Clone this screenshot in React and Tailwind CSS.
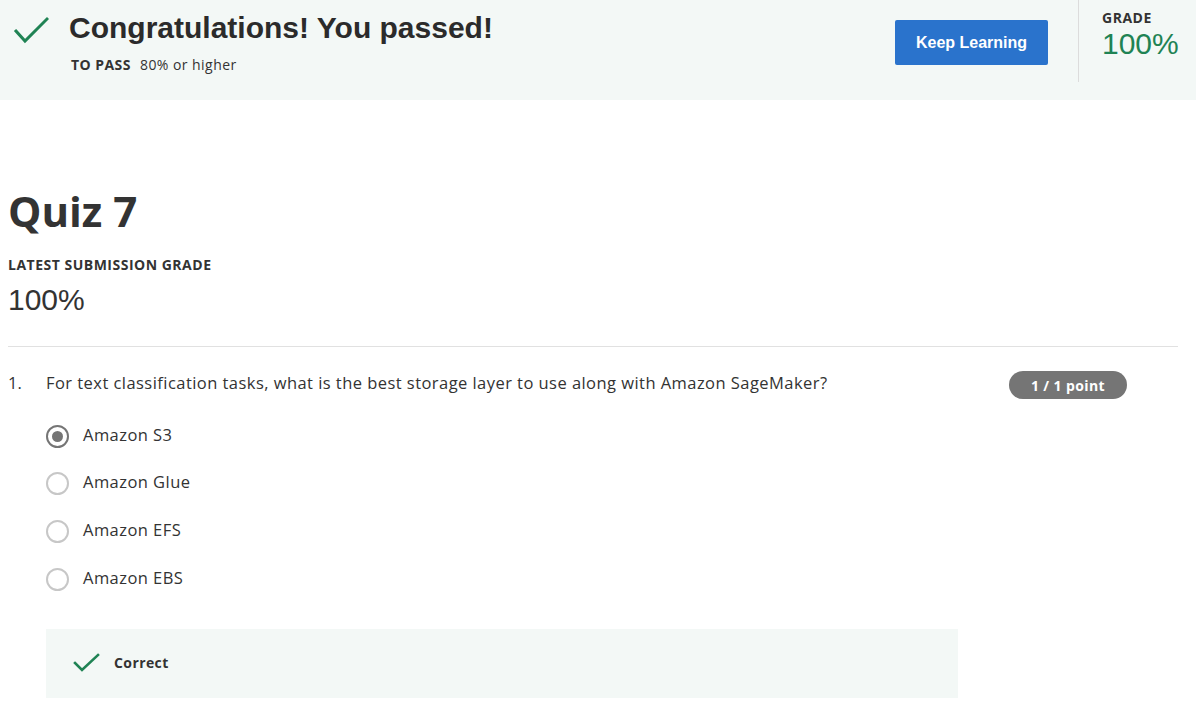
import React from "react";

const options = ["Amazon S3", "Amazon Glue", "Amazon EFS", "Amazon EBS"];

function Check({ className, width, height, d, strokeWidth = 3 }) {
  return (
    <svg
      className={className}
      width={width}
      height={height}
      viewBox={`0 0 ${width} ${height}`}
      fill="none"
    >
      <path d={d} stroke="#1f8354" strokeWidth={strokeWidth} strokeLinecap="square" />
    </svg>
  );
}

export default function App() {
  const selected = 0;

  return (
    <div className="min-h-screen bg-white font-['Open_Sans',sans-serif] text-[#333333]">
      {/* Pass banner */}
      <header className="flex h-[100px] bg-[#f3f8f6]">
        <div className="flex flex-1 pl-[13px]">
          <Check
            className="mt-[12px] shrink-0"
            width={36}
            height={36}
            d="M3 19 L12 29 L34 7"
          />
          <div className="ml-[20px] pt-[10px]">
            <h1 className="font-['Liberation_Sans',Arial,sans-serif] text-[30px] font-bold leading-[36px] text-[#2b2b2b]">
              Congratulations! You passed!
            </h1>
            <p className="ml-[2px] mt-[9px] text-[14px] leading-[20px] tracking-[0.45px]">
              <span className="font-bold">TO PASS</span>
              <span className="ml-[9px]">80% or higher</span>
            </p>
          </div>
        </div>
        <div className="pr-[30px] pt-[20px]">
          <button className="h-[45px] w-[153px] rounded-[2px] bg-[#2a73cc] font-['Liberation_Sans',Arial,sans-serif] text-[16px] font-bold text-white">
            Keep Learning
          </button>
        </div>
        <div className="h-[82px] w-px bg-[#dcdcdc]" />
        <div className="w-[117px] pl-[23px] pt-[8px]">
          <div className="text-[14px] font-bold leading-[20px] tracking-[0.5px]">GRADE</div>
          <div className="font-['Liberation_Sans',Arial,sans-serif] text-[30px] leading-[32px] text-[#1f8354]">
            100%
          </div>
        </div>
      </header>

      <main className="pl-[8px] pr-[18px] pt-[86px]">
        <h2 className="text-[42px] font-bold leading-[50px]">Quiz 7</h2>
        <div className="mt-[19px] text-[14px] font-bold leading-[20px] tracking-[0.5px]">
          LATEST SUBMISSION GRADE
        </div>
        <div className="mt-[9px] font-['Liberation_Sans',Arial,sans-serif] text-[30px] leading-[32px]">
          100%
        </div>
        <div className="mt-[30px] h-px bg-[#e1e1e1]" />

        <div className="mt-[24px] flex items-start">
          <span className="w-[38px] shrink-0 text-[16.5px] leading-[24px]">1.</span>
          <p className="flex-1 text-[16.5px] leading-[24px] tracking-[0.45px]">
            For text classification tasks, what is the best storage layer to use along with Amazon SageMaker?
          </p>
          <span className="mr-[51px] flex h-[28px] w-[118px] items-center justify-center rounded-full bg-[#757575] text-[14px] font-bold tracking-[0.4px] text-white">
            1 / 1 point
          </span>
        </div>

        <div className="ml-[38px] mt-[12px]">
          {options.map((opt, i) => (
            <label key={opt} className="flex h-[47.67px] items-center">
              {i === selected ? (
                <span className="mt-[3px] flex h-[23px] w-[23px] items-center justify-center rounded-full border-2 border-[#757575]">
                  <span className="h-[11px] w-[11px] rounded-full bg-[#757575]" />
                </span>
              ) : (
                <span className="mt-[3px] h-[23px] w-[23px] rounded-full border-2 border-[#c7c7c7]" />
              )}
              <span className="ml-[14px] text-[16.5px] leading-[24px] tracking-[0.45px]">{opt}</span>
            </label>
          ))}

          <div className="mt-[27px] flex h-[69px] w-[912px] items-center bg-[#f3f8f6] pl-[27px]">
            <Check
              className="shrink-0"
              width={28}
              height={22}
              d="M2 11 L9 18 L25 3"
              strokeWidth={2.6}
            />
            <span className="ml-[13px] text-[14px] font-bold leading-[20px] tracking-[0.4px]">Correct</span>
          </div>
        </div>
      </main>
    </div>
  );
}
